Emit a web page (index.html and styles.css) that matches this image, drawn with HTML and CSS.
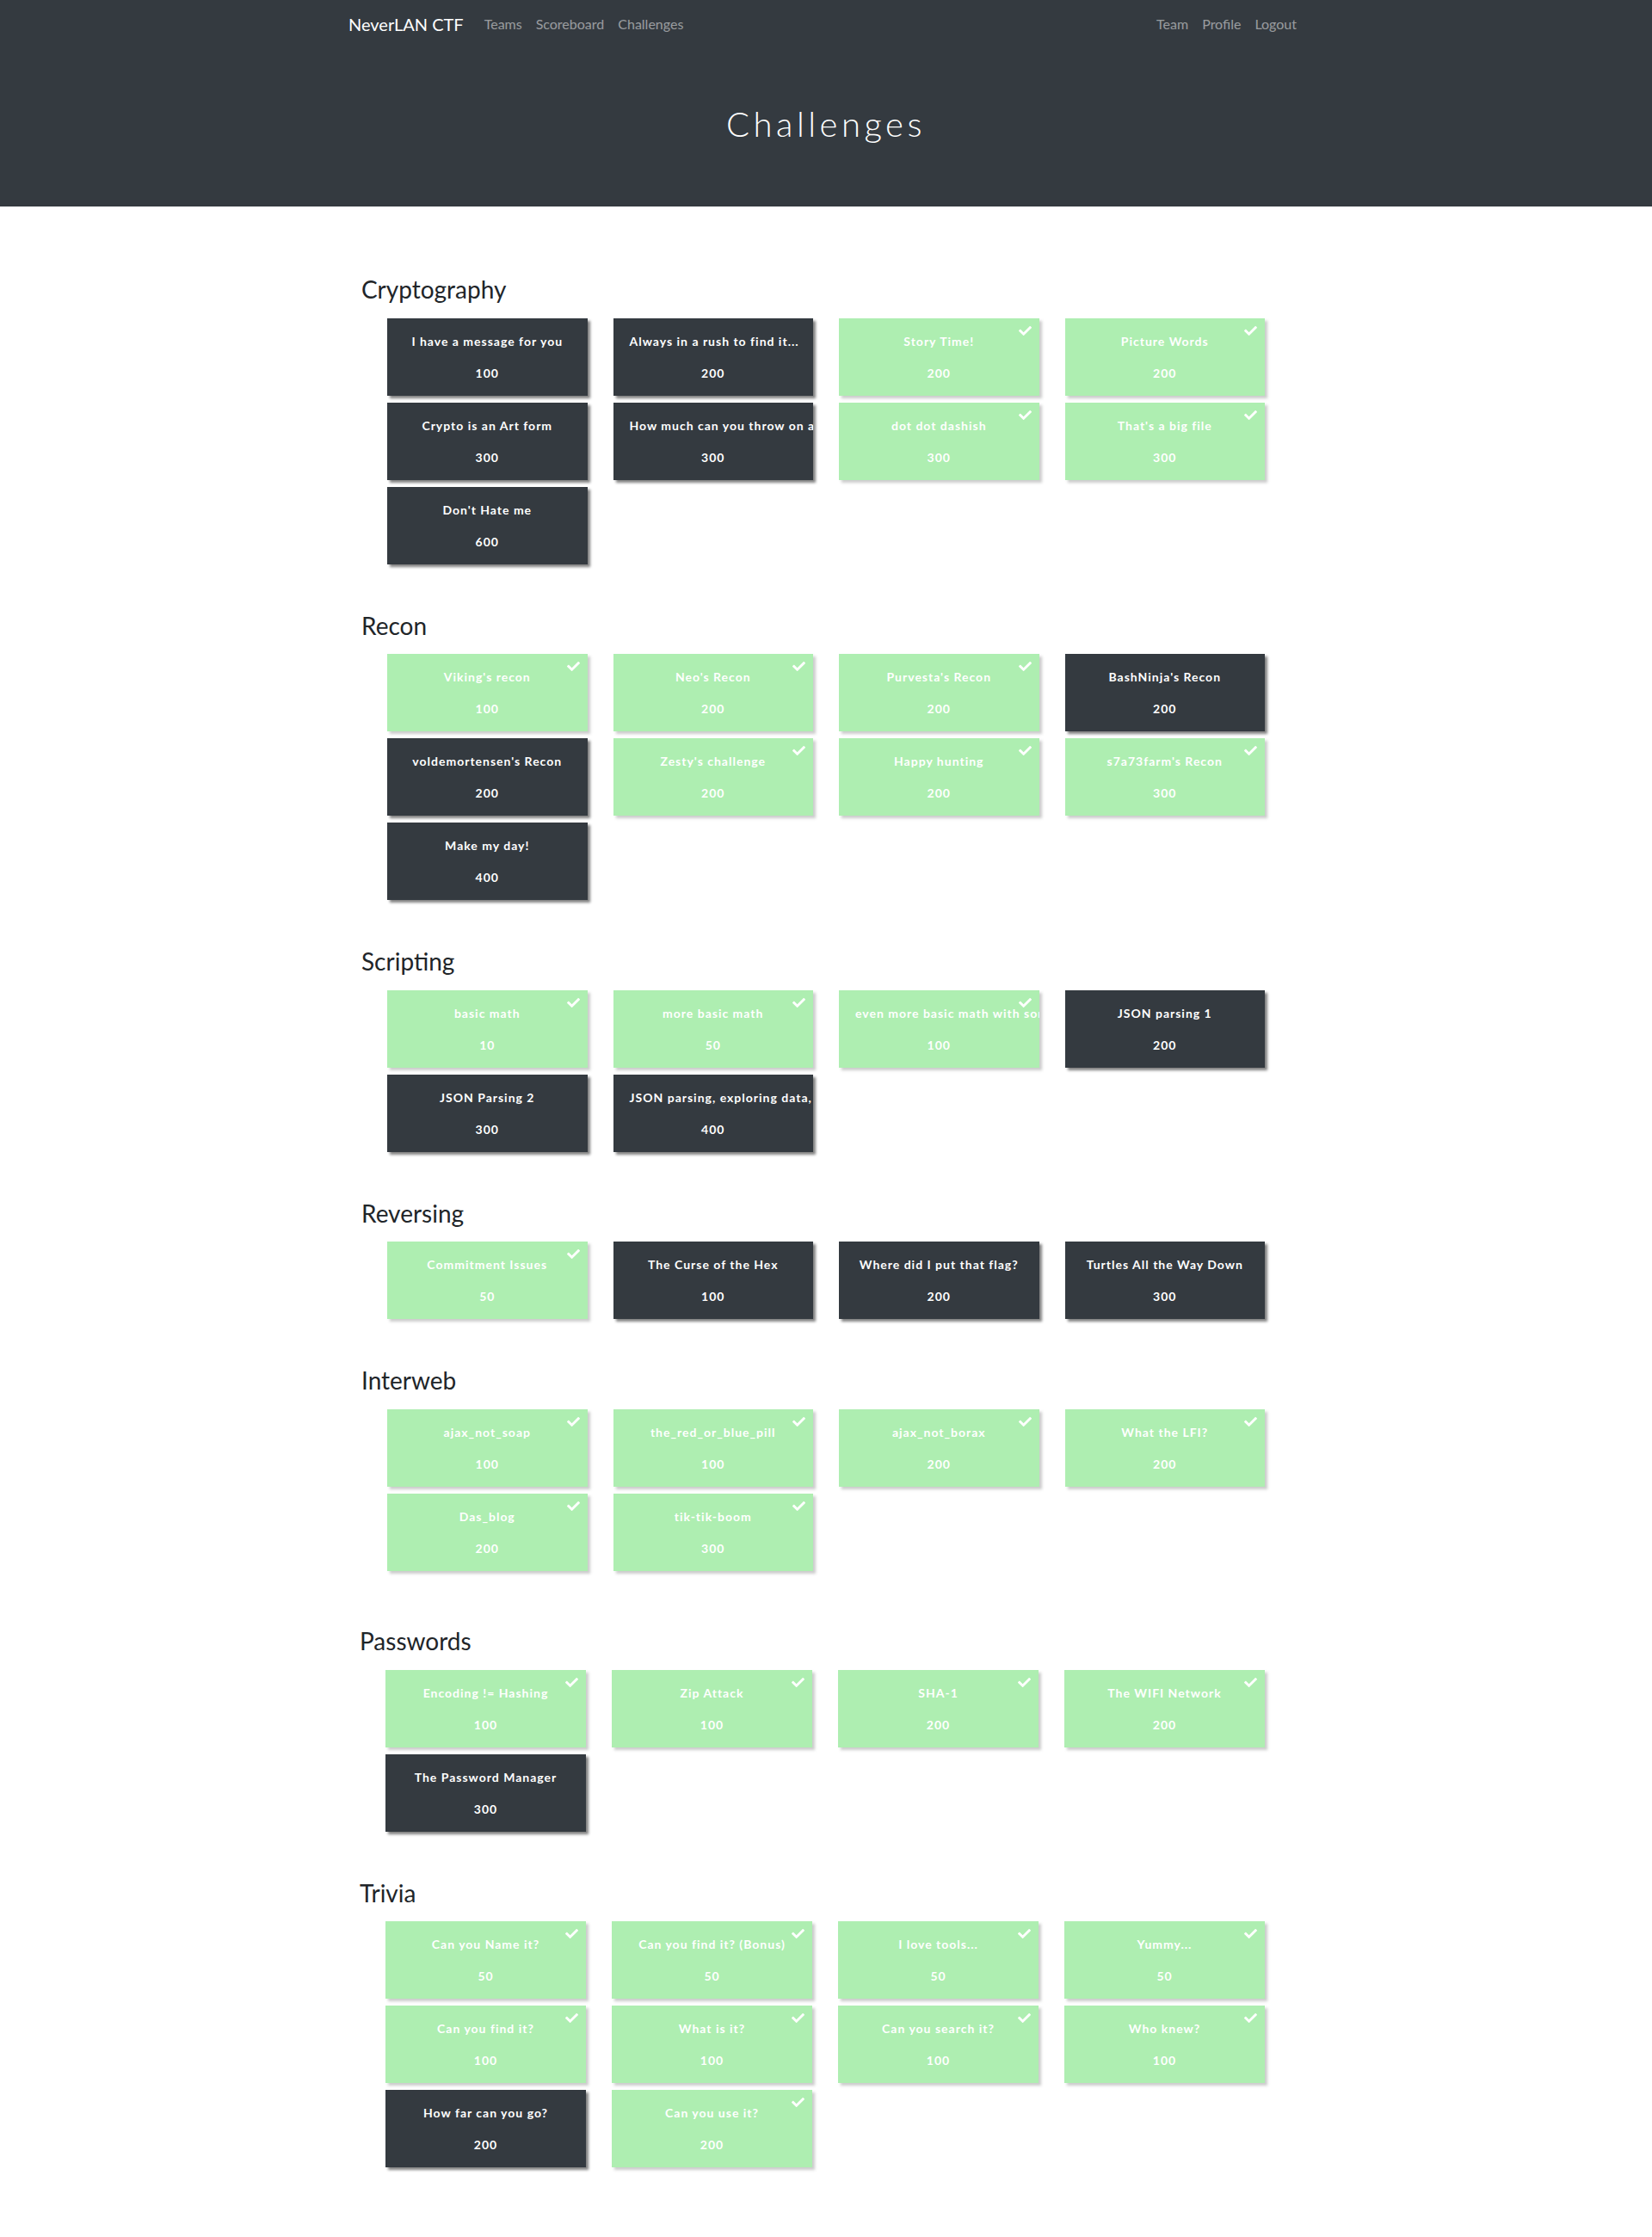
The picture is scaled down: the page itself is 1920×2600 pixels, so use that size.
FILE: index.html
```html
<!DOCTYPE html>
<html lang="en">
<head>
<meta charset="utf-8">
<title>Challenges</title>
<link rel="stylesheet" href="styles.css">
</head>
<body>
<nav class="navbar">
  <div class="container navbar__inner">
    <a class="navbar__brand" href="#">NeverLAN CTF</a>
    <ul class="navbar__nav">
      <li><a class="navbar__link" href="#">Teams</a></li>
      <li><a class="navbar__link" href="#">Scoreboard</a></li>
      <li><a class="navbar__link" href="#">Challenges</a></li>
    </ul>
    <ul class="navbar__nav navbar__nav--right">
      <li><a class="navbar__link" href="#">Team</a></li>
      <li><a class="navbar__link" href="#">Profile</a></li>
      <li><a class="navbar__link" href="#">Logout</a></li>
    </ul>
  </div>
</nav>

<div class="jumbotron">
  <h1 class="jumbotron__title">Challenges</h1>
</div>

<main class="container">

  <section class="category">
    <h3 class="category__title">Cryptography</h3>
    <div class="category__grid">
      <div class="chal"><p class="chal__name">I have a message for you</p><span class="chal__value">100</span></div>
      <div class="chal"><p class="chal__name">Always in a rush to find it...</p><span class="chal__value">200</span></div>
      <div class="chal chal--solved"><svg class="chal__check" viewBox="0 0 512 512"><path d="M173.9 439.4l-166.4-166.4c-10-10-10-26.2 0-36.2l36.2-36.2c10-10 26.2-10 36.2 0L192 312.7 432.1 72.6c10-10 26.2-10 36.2 0l36.2 36.2c10 10 10 26.2 0 36.2l-294.4 294.4c-10 10-26.2 10-36.2 0z"/></svg><p class="chal__name">Story Time!</p><span class="chal__value">200</span></div>
      <div class="chal chal--solved"><svg class="chal__check" viewBox="0 0 512 512"><path d="M173.9 439.4l-166.4-166.4c-10-10-10-26.2 0-36.2l36.2-36.2c10-10 26.2-10 36.2 0L192 312.7 432.1 72.6c10-10 26.2-10 36.2 0l36.2 36.2c10 10 10 26.2 0 36.2l-294.4 294.4c-10 10-26.2 10-36.2 0z"/></svg><p class="chal__name">Picture Words</p><span class="chal__value">200</span></div>
      <div class="chal"><p class="chal__name">Crypto is an Art form</p><span class="chal__value">300</span></div>
      <div class="chal"><p class="chal__name">How much can you throw on a floppy?</p><span class="chal__value">300</span></div>
      <div class="chal chal--solved"><svg class="chal__check" viewBox="0 0 512 512"><path d="M173.9 439.4l-166.4-166.4c-10-10-10-26.2 0-36.2l36.2-36.2c10-10 26.2-10 36.2 0L192 312.7 432.1 72.6c10-10 26.2-10 36.2 0l36.2 36.2c10 10 10 26.2 0 36.2l-294.4 294.4c-10 10-26.2 10-36.2 0z"/></svg><p class="chal__name">dot dot dashish</p><span class="chal__value">300</span></div>
      <div class="chal chal--solved"><svg class="chal__check" viewBox="0 0 512 512"><path d="M173.9 439.4l-166.4-166.4c-10-10-10-26.2 0-36.2l36.2-36.2c10-10 26.2-10 36.2 0L192 312.7 432.1 72.6c10-10 26.2-10 36.2 0l36.2 36.2c10 10 10 26.2 0 36.2l-294.4 294.4c-10 10-26.2 10-36.2 0z"/></svg><p class="chal__name">That's a big file</p><span class="chal__value">300</span></div>
      <div class="chal"><p class="chal__name">Don't Hate me</p><span class="chal__value">600</span></div>
    </div>
  </section>

  <section class="category">
    <h3 class="category__title">Recon</h3>
    <div class="category__grid">
      <div class="chal chal--solved"><svg class="chal__check" viewBox="0 0 512 512"><path d="M173.9 439.4l-166.4-166.4c-10-10-10-26.2 0-36.2l36.2-36.2c10-10 26.2-10 36.2 0L192 312.7 432.1 72.6c10-10 26.2-10 36.2 0l36.2 36.2c10 10 10 26.2 0 36.2l-294.4 294.4c-10 10-26.2 10-36.2 0z"/></svg><p class="chal__name">Viking's recon</p><span class="chal__value">100</span></div>
      <div class="chal chal--solved"><svg class="chal__check" viewBox="0 0 512 512"><path d="M173.9 439.4l-166.4-166.4c-10-10-10-26.2 0-36.2l36.2-36.2c10-10 26.2-10 36.2 0L192 312.7 432.1 72.6c10-10 26.2-10 36.2 0l36.2 36.2c10 10 10 26.2 0 36.2l-294.4 294.4c-10 10-26.2 10-36.2 0z"/></svg><p class="chal__name">Neo's Recon</p><span class="chal__value">200</span></div>
      <div class="chal chal--solved"><svg class="chal__check" viewBox="0 0 512 512"><path d="M173.9 439.4l-166.4-166.4c-10-10-10-26.2 0-36.2l36.2-36.2c10-10 26.2-10 36.2 0L192 312.7 432.1 72.6c10-10 26.2-10 36.2 0l36.2 36.2c10 10 10 26.2 0 36.2l-294.4 294.4c-10 10-26.2 10-36.2 0z"/></svg><p class="chal__name">Purvesta's Recon</p><span class="chal__value">200</span></div>
      <div class="chal"><p class="chal__name">BashNinja's Recon</p><span class="chal__value">200</span></div>
      <div class="chal"><p class="chal__name">voldemortensen's Recon</p><span class="chal__value">200</span></div>
      <div class="chal chal--solved"><svg class="chal__check" viewBox="0 0 512 512"><path d="M173.9 439.4l-166.4-166.4c-10-10-10-26.2 0-36.2l36.2-36.2c10-10 26.2-10 36.2 0L192 312.7 432.1 72.6c10-10 26.2-10 36.2 0l36.2 36.2c10 10 10 26.2 0 36.2l-294.4 294.4c-10 10-26.2 10-36.2 0z"/></svg><p class="chal__name">Zesty's challenge</p><span class="chal__value">200</span></div>
      <div class="chal chal--solved"><svg class="chal__check" viewBox="0 0 512 512"><path d="M173.9 439.4l-166.4-166.4c-10-10-10-26.2 0-36.2l36.2-36.2c10-10 26.2-10 36.2 0L192 312.7 432.1 72.6c10-10 26.2-10 36.2 0l36.2 36.2c10 10 10 26.2 0 36.2l-294.4 294.4c-10 10-26.2 10-36.2 0z"/></svg><p class="chal__name">Happy hunting</p><span class="chal__value">200</span></div>
      <div class="chal chal--solved"><svg class="chal__check" viewBox="0 0 512 512"><path d="M173.9 439.4l-166.4-166.4c-10-10-10-26.2 0-36.2l36.2-36.2c10-10 26.2-10 36.2 0L192 312.7 432.1 72.6c10-10 26.2-10 36.2 0l36.2 36.2c10 10 10 26.2 0 36.2l-294.4 294.4c-10 10-26.2 10-36.2 0z"/></svg><p class="chal__name">s7a73farm's Recon</p><span class="chal__value">300</span></div>
      <div class="chal"><p class="chal__name">Make my day!</p><span class="chal__value">400</span></div>
    </div>
  </section>

  <section class="category">
    <h3 class="category__title">Scripting</h3>
    <div class="category__grid">
      <div class="chal chal--solved"><svg class="chal__check" viewBox="0 0 512 512"><path d="M173.9 439.4l-166.4-166.4c-10-10-10-26.2 0-36.2l36.2-36.2c10-10 26.2-10 36.2 0L192 312.7 432.1 72.6c10-10 26.2-10 36.2 0l36.2 36.2c10 10 10 26.2 0 36.2l-294.4 294.4c-10 10-26.2 10-36.2 0z"/></svg><p class="chal__name">basic math</p><span class="chal__value">10</span></div>
      <div class="chal chal--solved"><svg class="chal__check" viewBox="0 0 512 512"><path d="M173.9 439.4l-166.4-166.4c-10-10-10-26.2 0-36.2l36.2-36.2c10-10 26.2-10 36.2 0L192 312.7 432.1 72.6c10-10 26.2-10 36.2 0l36.2 36.2c10 10 10 26.2 0 36.2l-294.4 294.4c-10 10-26.2 10-36.2 0z"/></svg><p class="chal__name">more basic math</p><span class="chal__value">50</span></div>
      <div class="chal chal--solved"><svg class="chal__check" viewBox="0 0 512 512"><path d="M173.9 439.4l-166.4-166.4c-10-10-10-26.2 0-36.2l36.2-36.2c10-10 26.2-10 36.2 0L192 312.7 432.1 72.6c10-10 26.2-10 36.2 0l36.2 36.2c10 10 10 26.2 0 36.2l-294.4 294.4c-10 10-26.2 10-36.2 0z"/></svg><p class="chal__name">even more basic math with some json</p><span class="chal__value">100</span></div>
      <div class="chal"><p class="chal__name">JSON parsing 1</p><span class="chal__value">200</span></div>
      <div class="chal"><p class="chal__name">JSON Parsing 2</p><span class="chal__value">300</span></div>
      <div class="chal"><p class="chal__name">JSON parsing, exploring data, and more</p><span class="chal__value">400</span></div>
    </div>
  </section>

  <section class="category">
    <h3 class="category__title">Reversing</h3>
    <div class="category__grid">
      <div class="chal chal--solved"><svg class="chal__check" viewBox="0 0 512 512"><path d="M173.9 439.4l-166.4-166.4c-10-10-10-26.2 0-36.2l36.2-36.2c10-10 26.2-10 36.2 0L192 312.7 432.1 72.6c10-10 26.2-10 36.2 0l36.2 36.2c10 10 10 26.2 0 36.2l-294.4 294.4c-10 10-26.2 10-36.2 0z"/></svg><p class="chal__name">Commitment Issues</p><span class="chal__value">50</span></div>
      <div class="chal"><p class="chal__name">The Curse of the Hex</p><span class="chal__value">100</span></div>
      <div class="chal"><p class="chal__name">Where did I put that flag?</p><span class="chal__value">200</span></div>
      <div class="chal"><p class="chal__name">Turtles All the Way Down</p><span class="chal__value">300</span></div>
    </div>
  </section>

  <section class="category">
    <h3 class="category__title">Interweb</h3>
    <div class="category__grid">
      <div class="chal chal--solved"><svg class="chal__check" viewBox="0 0 512 512"><path d="M173.9 439.4l-166.4-166.4c-10-10-10-26.2 0-36.2l36.2-36.2c10-10 26.2-10 36.2 0L192 312.7 432.1 72.6c10-10 26.2-10 36.2 0l36.2 36.2c10 10 10 26.2 0 36.2l-294.4 294.4c-10 10-26.2 10-36.2 0z"/></svg><p class="chal__name">ajax_not_soap</p><span class="chal__value">100</span></div>
      <div class="chal chal--solved"><svg class="chal__check" viewBox="0 0 512 512"><path d="M173.9 439.4l-166.4-166.4c-10-10-10-26.2 0-36.2l36.2-36.2c10-10 26.2-10 36.2 0L192 312.7 432.1 72.6c10-10 26.2-10 36.2 0l36.2 36.2c10 10 10 26.2 0 36.2l-294.4 294.4c-10 10-26.2 10-36.2 0z"/></svg><p class="chal__name">the_red_or_blue_pill</p><span class="chal__value">100</span></div>
      <div class="chal chal--solved"><svg class="chal__check" viewBox="0 0 512 512"><path d="M173.9 439.4l-166.4-166.4c-10-10-10-26.2 0-36.2l36.2-36.2c10-10 26.2-10 36.2 0L192 312.7 432.1 72.6c10-10 26.2-10 36.2 0l36.2 36.2c10 10 10 26.2 0 36.2l-294.4 294.4c-10 10-26.2 10-36.2 0z"/></svg><p class="chal__name">ajax_not_borax</p><span class="chal__value">200</span></div>
      <div class="chal chal--solved"><svg class="chal__check" viewBox="0 0 512 512"><path d="M173.9 439.4l-166.4-166.4c-10-10-10-26.2 0-36.2l36.2-36.2c10-10 26.2-10 36.2 0L192 312.7 432.1 72.6c10-10 26.2-10 36.2 0l36.2 36.2c10 10 10 26.2 0 36.2l-294.4 294.4c-10 10-26.2 10-36.2 0z"/></svg><p class="chal__name">What the LFI?</p><span class="chal__value">200</span></div>
      <div class="chal chal--solved"><svg class="chal__check" viewBox="0 0 512 512"><path d="M173.9 439.4l-166.4-166.4c-10-10-10-26.2 0-36.2l36.2-36.2c10-10 26.2-10 36.2 0L192 312.7 432.1 72.6c10-10 26.2-10 36.2 0l36.2 36.2c10 10 10 26.2 0 36.2l-294.4 294.4c-10 10-26.2 10-36.2 0z"/></svg><p class="chal__name">Das_blog</p><span class="chal__value">200</span></div>
      <div class="chal chal--solved"><svg class="chal__check" viewBox="0 0 512 512"><path d="M173.9 439.4l-166.4-166.4c-10-10-10-26.2 0-36.2l36.2-36.2c10-10 26.2-10 36.2 0L192 312.7 432.1 72.6c10-10 26.2-10 36.2 0l36.2 36.2c10 10 10 26.2 0 36.2l-294.4 294.4c-10 10-26.2 10-36.2 0z"/></svg><p class="chal__name">tik-tik-boom</p><span class="chal__value">300</span></div>
    </div>
  </section>

  <section class="category category--shifted category--spaced">
    <h3 class="category__title">Passwords</h3>
    <div class="category__grid">
      <div class="chal chal--solved"><svg class="chal__check" viewBox="0 0 512 512"><path d="M173.9 439.4l-166.4-166.4c-10-10-10-26.2 0-36.2l36.2-36.2c10-10 26.2-10 36.2 0L192 312.7 432.1 72.6c10-10 26.2-10 36.2 0l36.2 36.2c10 10 10 26.2 0 36.2l-294.4 294.4c-10 10-26.2 10-36.2 0z"/></svg><p class="chal__name">Encoding != Hashing</p><span class="chal__value">100</span></div>
      <div class="chal chal--solved"><svg class="chal__check" viewBox="0 0 512 512"><path d="M173.9 439.4l-166.4-166.4c-10-10-10-26.2 0-36.2l36.2-36.2c10-10 26.2-10 36.2 0L192 312.7 432.1 72.6c10-10 26.2-10 36.2 0l36.2 36.2c10 10 10 26.2 0 36.2l-294.4 294.4c-10 10-26.2 10-36.2 0z"/></svg><p class="chal__name">Zip Attack</p><span class="chal__value">100</span></div>
      <div class="chal chal--solved"><svg class="chal__check" viewBox="0 0 512 512"><path d="M173.9 439.4l-166.4-166.4c-10-10-10-26.2 0-36.2l36.2-36.2c10-10 26.2-10 36.2 0L192 312.7 432.1 72.6c10-10 26.2-10 36.2 0l36.2 36.2c10 10 10 26.2 0 36.2l-294.4 294.4c-10 10-26.2 10-36.2 0z"/></svg><p class="chal__name">SHA-1</p><span class="chal__value">200</span></div>
      <div class="chal chal--solved"><svg class="chal__check" viewBox="0 0 512 512"><path d="M173.9 439.4l-166.4-166.4c-10-10-10-26.2 0-36.2l36.2-36.2c10-10 26.2-10 36.2 0L192 312.7 432.1 72.6c10-10 26.2-10 36.2 0l36.2 36.2c10 10 10 26.2 0 36.2l-294.4 294.4c-10 10-26.2 10-36.2 0z"/></svg><p class="chal__name">The WIFI Network</p><span class="chal__value">200</span></div>
      <div class="chal"><p class="chal__name">The Password Manager</p><span class="chal__value">300</span></div>
    </div>
  </section>

  <section class="category category--shifted">
    <h3 class="category__title">Trivia</h3>
    <div class="category__grid">
      <div class="chal chal--solved"><svg class="chal__check" viewBox="0 0 512 512"><path d="M173.9 439.4l-166.4-166.4c-10-10-10-26.2 0-36.2l36.2-36.2c10-10 26.2-10 36.2 0L192 312.7 432.1 72.6c10-10 26.2-10 36.2 0l36.2 36.2c10 10 10 26.2 0 36.2l-294.4 294.4c-10 10-26.2 10-36.2 0z"/></svg><p class="chal__name">Can you Name it?</p><span class="chal__value">50</span></div>
      <div class="chal chal--solved"><svg class="chal__check" viewBox="0 0 512 512"><path d="M173.9 439.4l-166.4-166.4c-10-10-10-26.2 0-36.2l36.2-36.2c10-10 26.2-10 36.2 0L192 312.7 432.1 72.6c10-10 26.2-10 36.2 0l36.2 36.2c10 10 10 26.2 0 36.2l-294.4 294.4c-10 10-26.2 10-36.2 0z"/></svg><p class="chal__name">Can you find it? (Bonus)</p><span class="chal__value">50</span></div>
      <div class="chal chal--solved"><svg class="chal__check" viewBox="0 0 512 512"><path d="M173.9 439.4l-166.4-166.4c-10-10-10-26.2 0-36.2l36.2-36.2c10-10 26.2-10 36.2 0L192 312.7 432.1 72.6c10-10 26.2-10 36.2 0l36.2 36.2c10 10 10 26.2 0 36.2l-294.4 294.4c-10 10-26.2 10-36.2 0z"/></svg><p class="chal__name">I love tools...</p><span class="chal__value">50</span></div>
      <div class="chal chal--solved"><svg class="chal__check" viewBox="0 0 512 512"><path d="M173.9 439.4l-166.4-166.4c-10-10-10-26.2 0-36.2l36.2-36.2c10-10 26.2-10 36.2 0L192 312.7 432.1 72.6c10-10 26.2-10 36.2 0l36.2 36.2c10 10 10 26.2 0 36.2l-294.4 294.4c-10 10-26.2 10-36.2 0z"/></svg><p class="chal__name">Yummy...</p><span class="chal__value">50</span></div>
      <div class="chal chal--solved"><svg class="chal__check" viewBox="0 0 512 512"><path d="M173.9 439.4l-166.4-166.4c-10-10-10-26.2 0-36.2l36.2-36.2c10-10 26.2-10 36.2 0L192 312.7 432.1 72.6c10-10 26.2-10 36.2 0l36.2 36.2c10 10 10 26.2 0 36.2l-294.4 294.4c-10 10-26.2 10-36.2 0z"/></svg><p class="chal__name">Can you find it?</p><span class="chal__value">100</span></div>
      <div class="chal chal--solved"><svg class="chal__check" viewBox="0 0 512 512"><path d="M173.9 439.4l-166.4-166.4c-10-10-10-26.2 0-36.2l36.2-36.2c10-10 26.2-10 36.2 0L192 312.7 432.1 72.6c10-10 26.2-10 36.2 0l36.2 36.2c10 10 10 26.2 0 36.2l-294.4 294.4c-10 10-26.2 10-36.2 0z"/></svg><p class="chal__name">What is it?</p><span class="chal__value">100</span></div>
      <div class="chal chal--solved"><svg class="chal__check" viewBox="0 0 512 512"><path d="M173.9 439.4l-166.4-166.4c-10-10-10-26.2 0-36.2l36.2-36.2c10-10 26.2-10 36.2 0L192 312.7 432.1 72.6c10-10 26.2-10 36.2 0l36.2 36.2c10 10 10 26.2 0 36.2l-294.4 294.4c-10 10-26.2 10-36.2 0z"/></svg><p class="chal__name">Can you search it?</p><span class="chal__value">100</span></div>
      <div class="chal chal--solved"><svg class="chal__check" viewBox="0 0 512 512"><path d="M173.9 439.4l-166.4-166.4c-10-10-10-26.2 0-36.2l36.2-36.2c10-10 26.2-10 36.2 0L192 312.7 432.1 72.6c10-10 26.2-10 36.2 0l36.2 36.2c10 10 10 26.2 0 36.2l-294.4 294.4c-10 10-26.2 10-36.2 0z"/></svg><p class="chal__name">Who knew?</p><span class="chal__value">100</span></div>
      <div class="chal"><p class="chal__name">How far can you go?</p><span class="chal__value">200</span></div>
      <div class="chal chal--solved"><svg class="chal__check" viewBox="0 0 512 512"><path d="M173.9 439.4l-166.4-166.4c-10-10-10-26.2 0-36.2l36.2-36.2c10-10 26.2-10 36.2 0L192 312.7 432.1 72.6c10-10 26.2-10 36.2 0l36.2 36.2c10 10 10 26.2 0 36.2l-294.4 294.4c-10 10-26.2 10-36.2 0z"/></svg><p class="chal__name">Can you use it?</p><span class="chal__value">200</span></div>
    </div>
  </section>

</main>
</body>
</html>
```

FILE: styles.css
```css
* { box-sizing: border-box; }

body {
  margin: 0;
  background: #fff;
  color: #212529;
  font-family: "Lato", "Liberation Sans", sans-serif;
  font-size: 16px;
  line-height: 1.5;
}

.container {
  width: 1140px;
  margin: 0 auto;
  padding: 0 15px;
}

/* Navbar */
.navbar {
  background: #343a40;
  padding: 8px 0;
}
.navbar__inner {
  display: flex;
  align-items: center;
}
.navbar__brand {
  color: #fff;
  text-decoration: none;
  font-size: 20px;
  line-height: 30px;
  padding: 5px 0;
  margin-right: 16px;
}
.navbar__nav {
  display: flex;
  list-style: none;
  margin: 0;
  padding: 0;
}
.navbar__nav--right {
  margin-left: auto;
}
.navbar__link {
  display: block;
  padding: 8px;
  color: rgba(255, 255, 255, 0.5);
  text-decoration: none;
  font-size: 16px;
  line-height: 24px;
}

/* Jumbotron */
.jumbotron {
  background: #343a40;
  padding: 64px 0;
  margin-bottom: 33px;
}
.jumbotron__title {
  margin: 0 0 8px;
  text-align: center;
  color: #fff;
  font-family: "Lato", sans-serif;
  font-weight: 300;
  font-size: 40px;
  line-height: 48px;
  letter-spacing: 4.5px;
}

/* Categories */
.category {
  padding-top: 47px;
}
.category--shifted {
  margin-left: -2px;
}
.category--spaced {
  margin-top: 10px;
}
.category__title {
  margin: 0 0 8px 15px;
  font-size: 28px;
  font-weight: 400;
  line-height: 1.2;
  color: #212529;
}
.category__grid {
  margin: 0 45px;
  padding: 8px 0 8px;
  display: grid;
  grid-template-columns: repeat(4, 1fr);
  column-gap: 30px;
  row-gap: 8px;
}

/* Challenge buttons */
.chal {
  position: relative;
  background: #343a40;
  color: #fff;
  text-align: center;
  padding: 16px 19px;
  height: 90px;
  overflow: hidden;
  white-space: nowrap;
  font-size: 14px;
  font-weight: 700;
  letter-spacing: 1px;
  line-height: 21px;
  box-shadow: 3px 3px 3px #808080;
}
.chal__name {
  margin: 0 0 16px;
}
.chal__value {
  display: block;
}
.chal--solved {
  background: #37d63e;
  opacity: 0.4;
}
.chal__check {
  position: absolute;
  top: 7px;
  right: 9px;
  width: 15px;
  height: 15px;
  fill: #fff;
}
```
